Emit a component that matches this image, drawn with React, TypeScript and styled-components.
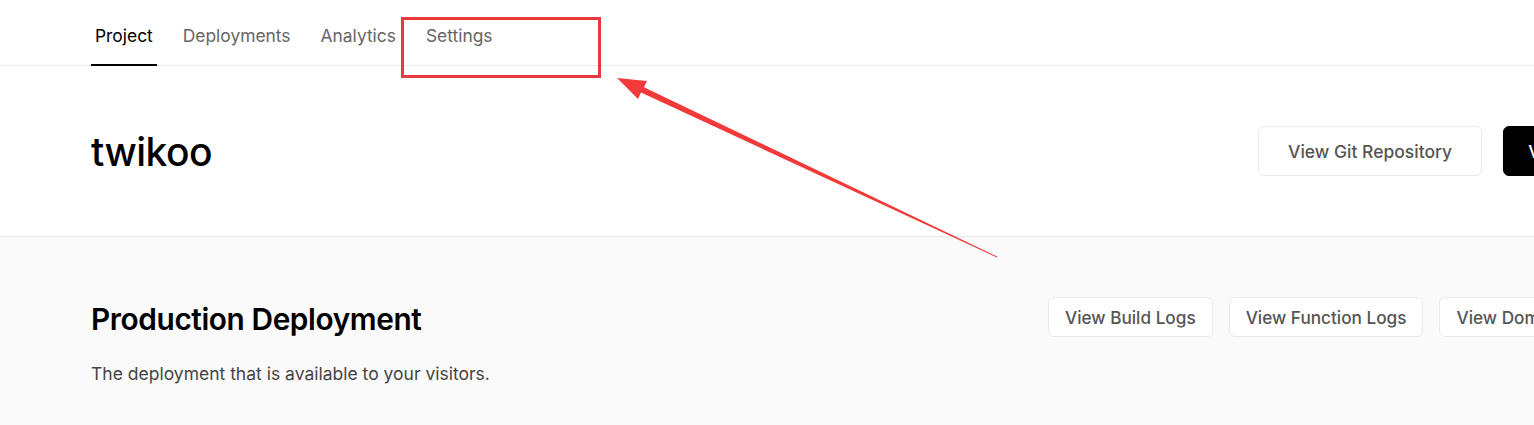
import React from "react";
import styled, { createGlobalStyle } from "styled-components";

const Global = createGlobalStyle`
  html, body { margin: 0; padding: 0; background: #fff; overflow: hidden; }
  body { font-family: Inter, "Noto Sans", sans-serif; color: #000; -webkit-font-smoothing: antialiased; }
  * { box-sizing: border-box; }
`;

const Page = styled.div`
  position: relative;
  width: 1534px;
  height: 425px;
  overflow: hidden;
`;

const TabBar = styled.nav`
  height: 66px;
  border-bottom: 1px solid #eaeaea;
  display: flex;
  align-items: stretch;
  gap: 22px;
  padding-left: 91px;
`;

const Tab = styled.a<{ $active?: boolean }>`
  display: flex;
  align-items: center;
  padding: 7px 4px 0;
  font-size: 17.4px;
  color: ${(p) => (p.$active ? "#000" : "#666")};
  border-bottom: 2px solid ${(p) => (p.$active ? "#000" : "transparent")};
  margin-bottom: -1px;
  text-decoration: none;
`;

const Header = styled.header`
  height: 171px;
  border-bottom: 1px solid #eaeaea;
  display: grid;
  grid-template-columns: 1167px auto;
  align-items: center;
  padding-left: 91px;
`;

const Title = styled.h1`
  margin: 0;
  font-size: 39px;
  font-weight: 500;
  letter-spacing: -0.5px;
  color: #000;
`;

const Actions = styled.div<{ $gap: number }>`
  display: flex;
  gap: ${(p) => p.$gap}px;
  white-space: nowrap;
`;

const Button = styled.button<{ $size: "lg" | "md"; $dark?: boolean }>`
  height: ${(p) => (p.$size === "lg" ? 50 : 40)}px;
  padding: 0 ${(p) => (p.$dark ? 24 : p.$size === "lg" ? 29 : 16)}px;
  font-family: inherit;
  font-size: ${(p) => (p.$size === "lg" ? 17.5 : 17.2)}px;
  font-weight: 500;
  color: ${(p) => (p.$dark ? "#fff" : "#555")};
  background: ${(p) => (p.$dark ? "#000" : "#fff")};
  border: 1px solid ${(p) => (p.$dark ? "#000" : "#eaeaea")};
  border-radius: 6px;
  white-space: nowrap;
`;

const Section = styled.section`
  background: #fafafa;
  height: 188px;
  padding: 60px 0 0 91px;
`;

const SectionHead = styled.div`
  display: grid;
  grid-template-columns: 957px auto;
  align-items: center;
`;

const SectionTitle = styled.h2`
  margin: 4px 0 0;
  font-size: 29.8px;
  font-weight: 600;
  letter-spacing: -0.4px;
  color: #000;
`;

const Description = styled.p`
  margin: 26px 0 0;
  font-size: 17.5px;
  color: #444;
`;

const Annotation = styled.svg`
  position: absolute;
  left: 0;
  top: 0;
  pointer-events: none;
`;

export default function App() {
  return (
    <Page>
      <Global />
      <TabBar>
        <Tab $active>Project</Tab>
        <Tab>Deployments</Tab>
        <Tab>Analytics</Tab>
        <Tab>Settings</Tab>
      </TabBar>
      <Header>
        <Title>twikoo</Title>
        <Actions $gap={21}>
          <Button $size="lg">View Git Repository</Button>
          <Button $size="lg" $dark>Visit</Button>
        </Actions>
      </Header>
      <Section>
        <SectionHead>
          <SectionTitle>Production Deployment</SectionTitle>
          <Actions $gap={16}>
            <Button $size="md">View Build Logs</Button>
            <Button $size="md">View Function Logs</Button>
            <Button $size="md">View Domains</Button>
          </Actions>
        </SectionHead>
        <Description>The deployment that is available to your visitors.</Description>
      </Section>
      <Annotation width="1534" height="425" viewBox="0 0 1534 425">
        <rect x="402.5" y="18.5" width="197" height="58" fill="none" stroke="#e8383d" strokeWidth="3" />
        <polygon
          points="617,78 647,81 644,87.2 997.2,256.6 996.8,257.4 641,92.6 638,99"
          fill="#f23a3a"
        />
      </Annotation>
    </Page>
  );
}
